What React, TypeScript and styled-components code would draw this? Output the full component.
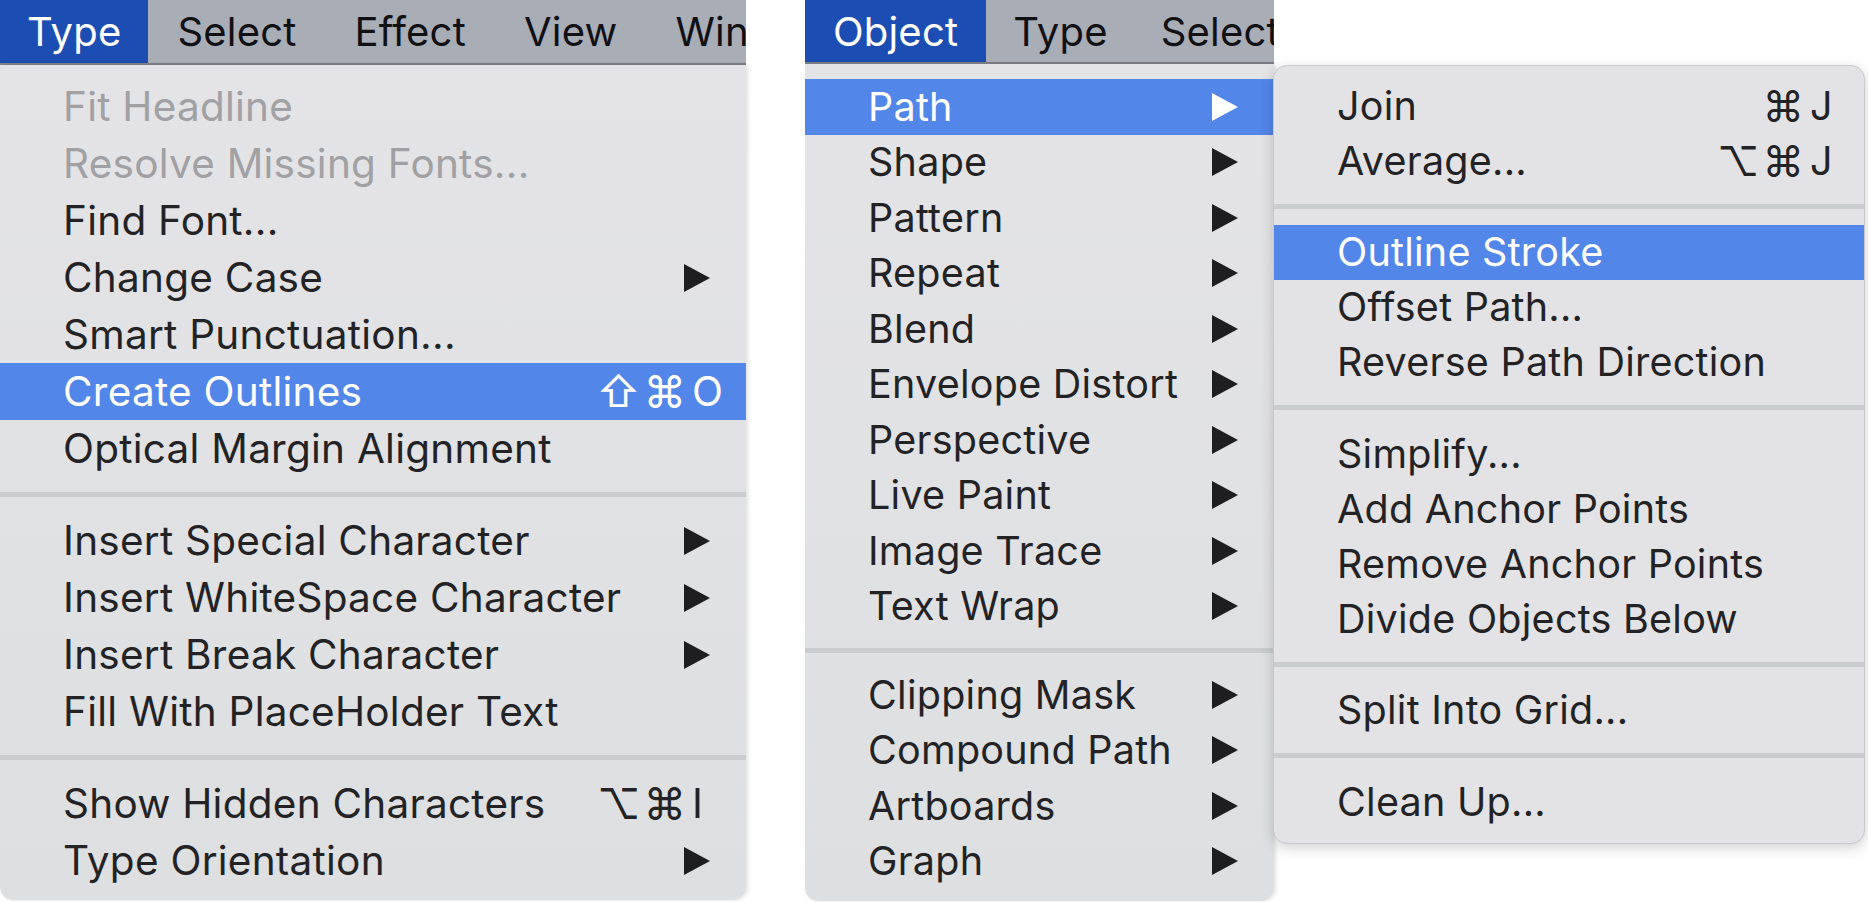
import React from "react";
import styled, { createGlobalStyle } from "styled-components";

type Item =
    | "sep"
    | {
          label: string;
          disabled?: boolean;
          active?: boolean;
          sub?: boolean;
          mods?: string;
          keyName?: string;
      };

const GlobalStyle = createGlobalStyle`
    html, body {
        margin: 0;
        padding: 0;
        background: #ffffff;
    }
    body {
        font-family: "Inter", "DejaVu Sans", "Noto Sans", sans-serif;
        -webkit-font-smoothing: antialiased;
    }
`;

const Page = styled.div`
    display: flex;
    align-items: flex-start;
    width: 1868px;
    height: 902px;
    overflow: hidden;
    background: #ffffff;
`;

const MenuColumn = styled.div<{ $width: number; $gap?: number }>`
    display: flex;
    flex-direction: column;
    width: ${(p) => p.$width}px;
    margin-left: ${(p) => p.$gap || 0}px;
    flex-shrink: 0;
`;

const MenuBar = styled.div<{ $height: number }>`
    display: flex;
    height: ${(p) => p.$height}px;
    background: #a9adb6;
    border-bottom: 2px solid #7f8288;
    overflow: hidden;
    white-space: nowrap;
`;

const BarItem = styled.div<{ $active?: boolean; $pad: number }>`
    display: flex;
    align-items: center;
    padding: 0 ${(p) => p.$pad}px;
    font-size: 40px;
    letter-spacing: 0.2px;
    color: ${(p) => (p.$active ? "#ffffff" : "#111114")};
    background: ${(p) => (p.$active ? "#1b4db3" : "transparent")};
`;

const Dropdown = styled.div<{ $top: number; $bottom: number }>`
    display: flex;
    flex-direction: column;
    padding: ${(p) => p.$top}px 0 ${(p) => p.$bottom}px;
    background: linear-gradient(#e4e4e6, #dedfe1);
    border-radius: 0 0 13px 13px;
    box-shadow: 2px 0 4px rgba(0, 0, 0, 0.12);
`;

const SubMenu = styled.div`
    display: flex;
    flex-direction: column;
    width: 590px;
    margin-top: 65px;
    margin-left: -1px;
    padding: 12px 0 14px;
    flex-shrink: 0;
    background: #e3e3e5;
    border: 1px solid #c9c9cc;
    border-radius: 14px;
    box-shadow: 0 4px 14px rgba(0, 0, 0, 0.18);
    position: relative;
    z-index: 1;
`;

const Row = styled.div<{ $h: number; $fs: number; $active?: boolean; $disabled?: boolean }>`
    display: flex;
    align-items: center;
    height: ${(p) => p.$h}px;
    padding: 0 22px 0 63px;
    font-size: ${(p) => p.$fs}px;
    letter-spacing: 0.25px;
    white-space: nowrap;
    color: ${(p) => (p.$active ? "#ffffff" : p.$disabled ? "#a1a1a4" : "#232325")};
    background: ${(p) => (p.$active ? "#5386e9" : "transparent")};
`;

const Label = styled.span`
    flex: 1;
`;

const Shortcut = styled.span`
    display: flex;
    align-items: center;
`;

const Mods = styled.span`
    letter-spacing: 3px;
    font-size: 1.05em;
`;

const KeyName = styled.span`
    width: 32px;
    margin-left: 3px;
`;

const Arrow = styled.svg`
    width: 26px;
    height: 28px;
    margin-right: 14px;
    flex-shrink: 0;
`;

const Separator = styled.div<{ $h: number }>`
    display: flex;
    align-items: center;
    height: ${(p) => p.$h}px;

    &::after {
        content: "";
        flex: 1;
        height: 5px;
        background: #cbccce;
    }
`;

const leftItems: Item[] = [
    { label: "Fit Headline", disabled: true },
    { label: "Resolve Missing Fonts...", disabled: true },
    { label: "Find Font..." },
    { label: "Change Case", sub: true },
    { label: "Smart Punctuation..." },
    { label: "Create Outlines", mods: "⇧⌘", keyName: "O", active: true },
    { label: "Optical Margin Alignment" },
    "sep",
    { label: "Insert Special Character", sub: true },
    { label: "Insert WhiteSpace Character", sub: true },
    { label: "Insert Break Character", sub: true },
    { label: "Fill With PlaceHolder Text" },
    "sep",
    { label: "Show Hidden Characters", mods: "⌥⌘", keyName: "I" },
    { label: "Type Orientation", sub: true },
];

const objectItems: Item[] = [
    { label: "Path", sub: true, active: true },
    { label: "Shape", sub: true },
    { label: "Pattern", sub: true },
    { label: "Repeat", sub: true },
    { label: "Blend", sub: true },
    { label: "Envelope Distort", sub: true },
    { label: "Perspective", sub: true },
    { label: "Live Paint", sub: true },
    { label: "Image Trace", sub: true },
    { label: "Text Wrap", sub: true },
    "sep",
    { label: "Clipping Mask", sub: true },
    { label: "Compound Path", sub: true },
    { label: "Artboards", sub: true },
    { label: "Graph", sub: true },
];

const pathItems: Item[] = [
    { label: "Join", mods: "⌘", keyName: "J" },
    { label: "Average...", mods: "⌥⌘", keyName: "J" },
    "sep",
    { label: "Outline Stroke", active: true },
    { label: "Offset Path..." },
    { label: "Reverse Path Direction" },
    "sep",
    { label: "Simplify..." },
    { label: "Add Anchor Points" },
    { label: "Remove Anchor Points" },
    { label: "Divide Objects Below" },
    "sep",
    { label: "Split Into Grid..." },
    "sep",
    { label: "Clean Up..." },
];

const SubArrow: React.FC<{ light?: boolean }> = ({ light }) => (
    <Arrow viewBox="0 0 26 28">
        <polygon points="0,0 26,14 0,28" fill={light ? "#ffffff" : "#1e1e20"} />
    </Arrow>
);

const MenuItems: React.FC<{ items: Item[]; rowH: number; sepH: number; fs: number }> = ({
    items,
    rowH,
    sepH,
    fs,
}) => (
    <>
        {items.map((item, i) => {
            if (item === "sep") {
                return <Separator key={i} $h={sepH} />;
            }
            return (
                <Row key={i} $h={rowH} $fs={fs} $active={item.active} $disabled={item.disabled}>
                    <Label>{item.label}</Label>
                    {item.keyName && (
                        <Shortcut>
                            <Mods>{item.mods}</Mods>
                            <KeyName>{item.keyName}</KeyName>
                        </Shortcut>
                    )}
                    {item.sub && <SubArrow light={item.active} />}
                </Row>
            );
        })}
    </>
);

export default function App() {
    return (
        <Page>
            <GlobalStyle />
            <MenuColumn $width={746}>
                <MenuBar $height={63}>
                    <BarItem $active $pad={27}>Type</BarItem>
                    <BarItem $pad={29}>Select</BarItem>
                    <BarItem $pad={29}>Effect</BarItem>
                    <BarItem $pad={29}>View</BarItem>
                    <BarItem $pad={29}>Window</BarItem>
                </MenuBar>
                <Dropdown $top={13} $bottom={11}>
                    <MenuItems items={leftItems} rowH={57} sepH={35} fs={40.5} />
                </Dropdown>
            </MenuColumn>

            <MenuColumn $width={469} $gap={59}>
                <MenuBar $height={62}>
                    <BarItem $active $pad={28}>Object</BarItem>
                    <BarItem $pad={27}>Type</BarItem>
                    <BarItem $pad={26}>Select</BarItem>
                </MenuBar>
                <Dropdown $top={15} $bottom={12}>
                    <MenuItems items={objectItems} rowH={55.5} sepH={33} fs={39.5} />
                </Dropdown>
            </MenuColumn>

            <SubMenu>
                <MenuItems items={pathItems} rowH={55} sepH={36.5} fs={39.5} />
            </SubMenu>
        </Page>
    );
}
